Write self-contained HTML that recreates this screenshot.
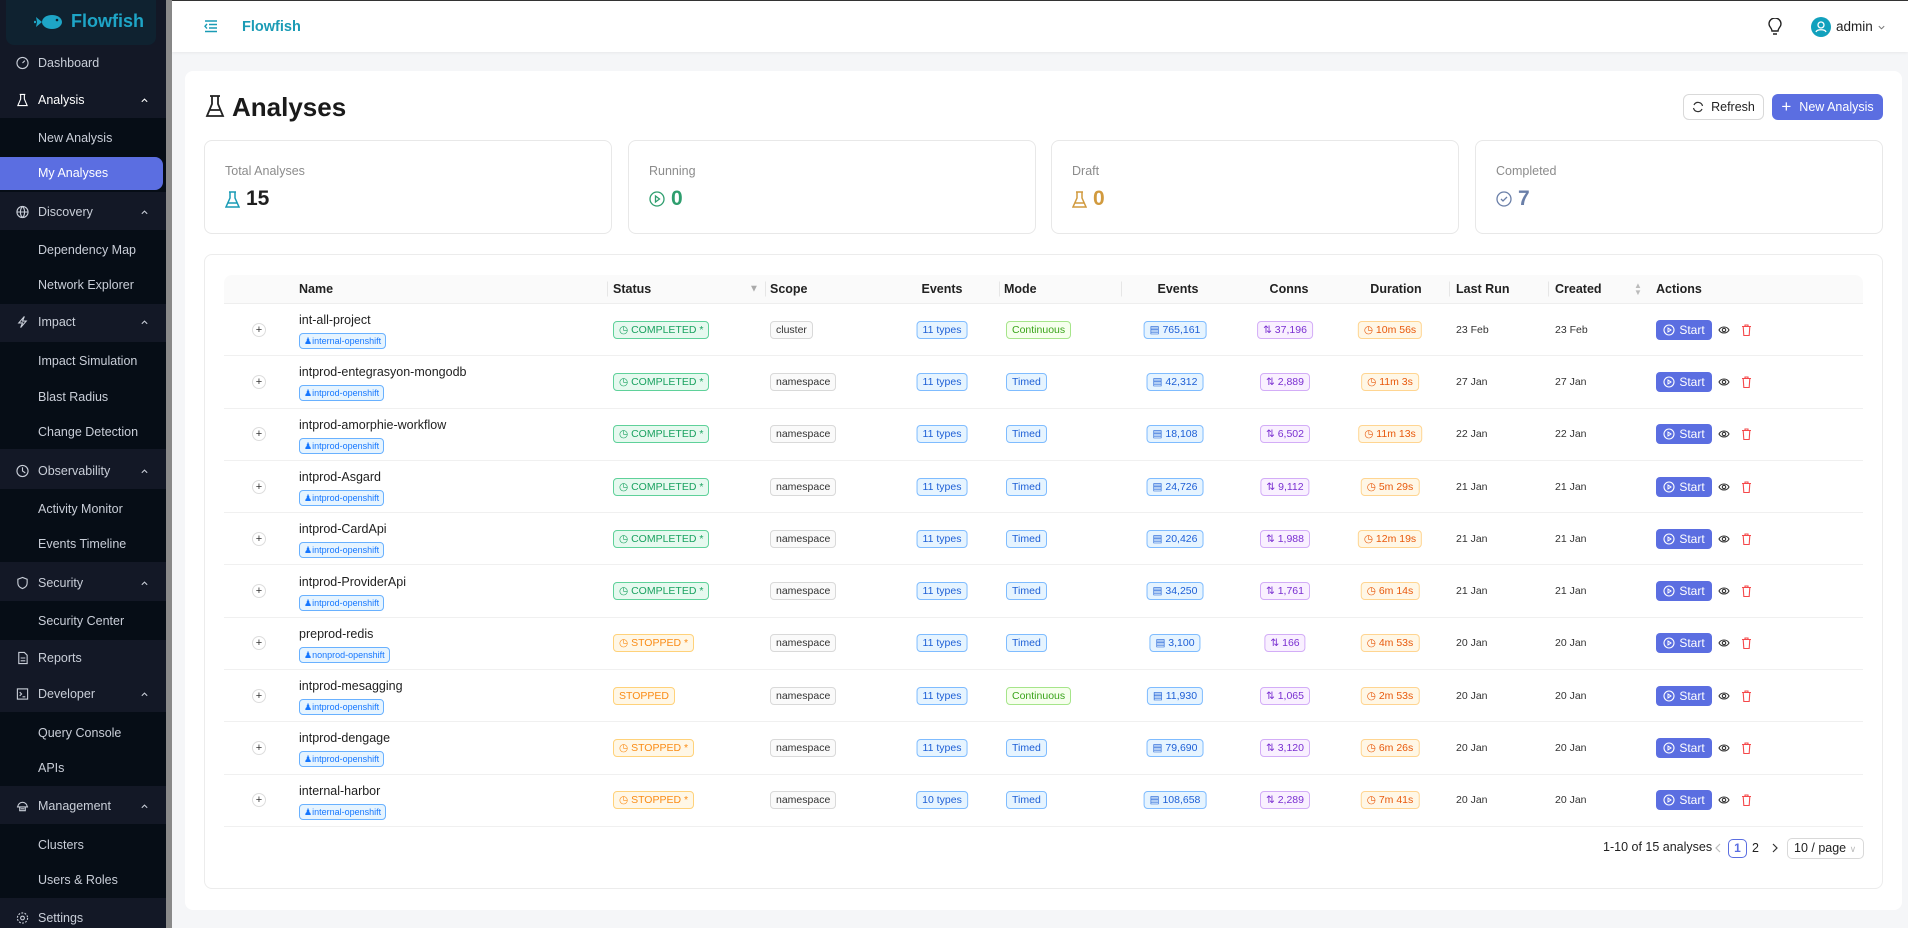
<!DOCTYPE html>
<html><head><meta charset="utf-8">
<style>
*{box-sizing:border-box;margin:0;padding:0}
body{width:1908px;height:928px;overflow:hidden;background:#f5f6f8;font-family:"Liberation Sans",sans-serif;position:relative;color:#1f1f1f}
.sb{position:absolute;left:0;top:0;width:166px;height:928px;background:#131826}
.scroll{position:absolute;left:166px;top:0;width:6px;height:928px;background:#8a8a8a}
.logo{position:absolute;left:6px;top:0;width:150px;height:45px;background:#0f2230;border-radius:0 0 8px 8px}
.logo span{position:absolute;left:65px;top:11px;color:#1ea5c6;font-weight:bold;font-size:18px}
.sub{position:absolute;left:0;width:166px;background:#060d16}
.it{position:absolute;left:38px;font-size:12.5px;color:#c9ced8;transform:translateY(-50%)}
.ic{position:absolute;left:16px;transform:translateY(-50%);width:13px;height:13px}
.chev{position:absolute;left:140px;transform:translateY(-50%);width:9px;height:9px}
.hl{position:absolute;left:0;top:157px;width:163px;height:33px;background:#5b6ee1;border-radius:0 8px 8px 0}
.hdr{position:absolute;left:172px;top:0;width:1736px;height:52px;background:#fff;border-top:1px solid #333;box-shadow:0 1px 3px rgba(0,0,0,.06)}
.main{position:absolute;left:185px;top:71px;width:1717px;height:839px;background:#fff;border-radius:8px}
.card{position:absolute;top:140px;width:408px;height:94px;background:#fff;border:1px solid #e8e8e8;border-radius:8px}
.card .l{position:absolute;left:20px;top:23px;font-size:12.5px;color:#8c8c8c}
.card .v{position:absolute;left:20px;top:46px;font-size:21px;font-weight:bold;display:flex;align-items:center;gap:6px}
.tbl{position:absolute;left:204px;top:254px;width:1679px;height:635px;border:1px solid #ececec;border-radius:8px;background:#fff}
.th{position:absolute;left:224px;top:275px;width:1639px;height:29px;background:#fafafa;border-bottom:1px solid #eee;border-radius:8px 8px 0 0}
.th div{position:absolute;top:50%;transform:translateY(-50%);font-size:12.5px;font-weight:bold;color:#222}
.th .c{transform:translate(-50%,-50%)}
.th .dv{width:1px;height:15px;background:#e6e6e6}
.row{position:absolute;left:224px;width:1639px;height:52.3px;border-bottom:1px solid #f0f0f0}
.row>*{position:absolute;top:50%;transform:translateY(-50%)}
.row>.c{transform:translate(-50%,-50%)}
.pl{left:28px;width:14px;height:14px;border:1px solid #ddd;border-radius:50%;font-size:11px;line-height:12px;text-align:center;color:#333}
.nm{left:75px;top:16px !important;font-size:12.5px;color:#1f1f1f}
.tag{left:75px;top:37px !important;font-size:9px;color:#1677ff;background:#e6f4ff;border:1px solid #69b1ff;border-radius:4px;padding:1px 4px;height:16px;line-height:13px}
.b{font-size:10.5px;border:1px solid;border-radius:4px;padding:0 5px;height:18px;line-height:16px;white-space:nowrap}
.ok{left:389px;color:#1aa260;background:#e6f9ef;border-color:#5fd19a}
.st{left:389px;color:#fa8c16;background:#fff7e6;border-color:#ffd27a}
.sc{left:546px;color:#333;background:#fafafa;border-color:#d9d9d9}
.ty{left:718px;color:#1d5fd6;background:#e6f4ff;border-color:#7fbcff}
.mt{left:782px;color:#1d5fd6;background:#e6f4ff;border-color:#7fbcff}
.mc{left:782px;color:#3aa41a;background:#f6ffed;border-color:#a6e58a}
.ev{left:951px;color:#1d5fd6;background:#e6f4ff;border-color:#7fbcff}
.cn{left:1061px;color:#7a2fd1;background:#f9f0ff;border-color:#d3adf7}
.du{left:1166px;color:#e8590c;background:#fff7e6;border-color:#ffd591}
.d1{left:1232px;font-size:10.5px;color:#333}
.d2{left:1331px;font-size:10.5px;color:#333}
.sbtn{left:1432px;background:#5b6ee1;color:#fff;font-size:12px;height:20px;width:56px;border-radius:4px;display:flex;align-items:center;justify-content:center;gap:4px}
.eye{left:1494px;width:12px;height:12px}
.tr{left:1517px;width:11px;height:13px}
</style></head><body>

<div class="sb"></div><div class="scroll"></div>
<div class="logo">
<svg style="position:absolute;left:28px;top:12px" width="32" height="20" viewBox="0 0 32 20"><ellipse cx="18" cy="10" rx="10" ry="7" fill="#1ea5c6"/><path d="M8 10 L2 5 L3 10 L2 15Z" fill="#1ea5c6"/><circle cx="23" cy="8" r="1.3" fill="#0f2230"/><circle cx="1" cy="10" r="1.2" fill="#1ea5c6"/></svg>
<span>Flowfish</span></div>

<div class="sub" style="top:118px;height:74px"></div>
<div class="sub" style="top:230px;height:74px"></div>
<div class="sub" style="top:342px;height:107px"></div>
<div class="sub" style="top:489px;height:73px"></div>
<div class="sub" style="top:601px;height:39px"></div>
<div class="sub" style="top:712px;height:74px"></div>
<div class="sub" style="top:824px;height:74px"></div>
<div class="hl"></div>

<svg class="ic" style="top:63px" viewBox="0 0 14 14" fill="none" stroke="#c9ced8" stroke-width="1.2"><circle cx="7" cy="7" r="6"/><path d="M7 7 L9.5 4.5"/></svg>
<div class="it" style="top:63px">Dashboard</div>
<svg class="ic" style="top:100px" viewBox="0 0 14 14" fill="none" stroke="#fff" stroke-width="1.2"><path d="M4 1h6M5 1v5L2 13h10L9 6V1"/></svg>
<div class="it" style="top:100px;color:#fff">Analysis</div>
<div class="it" style="top:137.5px">New Analysis</div>
<div class="it" style="top:173px;color:#fff">My Analyses</div>
<svg class="ic" style="top:212px" viewBox="0 0 14 14" fill="none" stroke="#c9ced8" stroke-width="1.2"><circle cx="7" cy="7" r="6"/><path d="M1 7h12M7 1c-3 3-3 9 0 12M7 1c3 3 3 9 0 12"/></svg>
<div class="it" style="top:212px">Discovery</div>
<div class="it" style="top:249.5px">Dependency Map</div>
<div class="it" style="top:285px">Network Explorer</div>
<svg class="ic" style="top:322px" viewBox="0 0 14 14" fill="none" stroke="#c9ced8" stroke-width="1.2"><path d="M9 1L3 8h4l-2 5 6-7H7z"/></svg>
<div class="it" style="top:322px">Impact</div>
<div class="it" style="top:361px">Impact Simulation</div>
<div class="it" style="top:397px">Blast Radius</div>
<div class="it" style="top:432px">Change Detection</div>
<svg class="ic" style="top:471px" viewBox="0 0 14 14" fill="none" stroke="#c9ced8" stroke-width="1.2"><circle cx="7" cy="7" r="6"/><path d="M7 3v4l3 2"/></svg>
<div class="it" style="top:471px">Observability</div>
<div class="it" style="top:508.6px">Activity Monitor</div>
<div class="it" style="top:544px">Events Timeline</div>
<svg class="ic" style="top:583px" viewBox="0 0 14 14" fill="none" stroke="#c9ced8" stroke-width="1.2"><path d="M7 1l5 2v4c0 3-2 5-5 6-3-1-5-3-5-6V3z"/></svg>
<div class="it" style="top:583px">Security</div>
<div class="it" style="top:620.6px">Security Center</div>
<svg class="ic" style="top:658px" viewBox="0 0 14 14" fill="none" stroke="#c9ced8" stroke-width="1.2"><path d="M3 1h6l3 3v9H3zM5 7h5M5 10h5"/></svg>
<div class="it" style="top:658px">Reports</div>
<svg class="ic" style="top:693.6px" viewBox="0 0 14 14" fill="none" stroke="#c9ced8" stroke-width="1.2"><rect x="1.5" y="1.5" width="11" height="11"/><path d="M4 5l2 2-2 2M7 10h3"/></svg>
<div class="it" style="top:693.6px">Developer</div>
<div class="it" style="top:732.5px">Query Console</div>
<div class="it" style="top:768px">APIs</div>
<svg class="ic" style="top:805.5px" viewBox="0 0 14 14" fill="none" stroke="#c9ced8" stroke-width="1.2"><path d="M2 8a5 5 0 0110 0M1 8h12M4 8v4h6V8M5 10h4"/></svg>
<div class="it" style="top:805.5px">Management</div>
<div class="it" style="top:844.5px">Clusters</div>
<div class="it" style="top:879.7px">Users &amp; Roles</div>
<svg class="ic" style="top:917.5px" viewBox="0 0 14 14" fill="none" stroke="#c9ced8" stroke-width="1.2"><circle cx="7" cy="7" r="2"/><circle cx="7" cy="7" r="5.5" stroke-dasharray="2 1.5"/></svg>
<div class="it" style="top:917.5px">Settings</div>
<svg class="chev" style="top:100px" viewBox="0 0 10 10" fill="none" stroke="#fff" stroke-width="1.2"><path d="M2 7l3-3 3 3"/></svg>
<svg class="chev" style="top:212px" viewBox="0 0 10 10" fill="none" stroke="#c9ced8" stroke-width="1.2"><path d="M2 7l3-3 3 3"/></svg>
<svg class="chev" style="top:322px" viewBox="0 0 10 10" fill="none" stroke="#c9ced8" stroke-width="1.2"><path d="M2 7l3-3 3 3"/></svg>
<svg class="chev" style="top:471px" viewBox="0 0 10 10" fill="none" stroke="#c9ced8" stroke-width="1.2"><path d="M2 7l3-3 3 3"/></svg>
<svg class="chev" style="top:583px" viewBox="0 0 10 10" fill="none" stroke="#c9ced8" stroke-width="1.2"><path d="M2 7l3-3 3 3"/></svg>
<svg class="chev" style="top:693.6px" viewBox="0 0 10 10" fill="none" stroke="#c9ced8" stroke-width="1.2"><path d="M2 7l3-3 3 3"/></svg>
<svg class="chev" style="top:805.5px" viewBox="0 0 10 10" fill="none" stroke="#c9ced8" stroke-width="1.2"><path d="M2 7l3-3 3 3"/></svg>

<div class="hdr">
<svg style="position:absolute;left:32px;top:19px" width="14" height="13" viewBox="0 0 14 13" fill="none" stroke="#1a9bb5" stroke-width="1.4"><path d="M1 1h12M5 4.5h8M5 8h8M1 11.5h12M3 4l-2 2.3 2 2.3"/></svg>
<div style="position:absolute;left:70px;top:18px;font-size:14.5px;font-weight:bold;color:#1a9bb5">Flowfish</div>
<svg style="position:absolute;left:1596px;top:17px" width="14" height="18" viewBox="0 0 14 18" fill="none" stroke="#222" stroke-width="1.4"><path d="M4 13c0-3-3-4-3-7a6 6 0 0112 0c0 3-3 4-3 7zM5 16h4"/></svg>
<div style="position:absolute;left:1639px;top:16px;width:20px;height:20px;border-radius:50%;background:#12a1bd"><svg width="20" height="20" viewBox="0 0 20 20" fill="none" stroke="#fff" stroke-width="1.3"><circle cx="10" cy="8" r="3"/><path d="M5 15c1-3 9-3 10 0"/></svg></div>
<div style="position:absolute;left:1664px;top:18px;font-size:13.5px;color:#222">admin</div>
<svg style="position:absolute;left:1705px;top:22px" width="9" height="9" viewBox="0 0 10 10" fill="none" stroke="#777" stroke-width="1.1"><path d="M2 3.5l3 3 3-3"/></svg>
</div>

<div class="main"></div>
<svg style="position:absolute;left:205px;top:94px" width="20" height="24" viewBox="0 0 20 24" fill="none" stroke="#222" stroke-width="1.8"><path d="M5 2h10M7 2v8L2 22h16L13 10V2M5 16h10"/></svg>
<div style="position:absolute;left:232px;top:92px;font-size:26px;font-weight:bold;color:#1a1a1a">Analyses</div>
<div style="position:absolute;left:1683px;top:94px;width:81px;height:26px;border:1px solid #d9d9d9;border-radius:6px;background:#fff;font-size:12.5px;display:flex;align-items:center;justify-content:center;gap:7px;color:#222"><svg width="12" height="12" viewBox="0 0 12 12" fill="none" stroke="#333" stroke-width="1.2"><path d="M10.5 5A4.5 4.5 0 002 4M1.5 7A4.5 4.5 0 0010 8"/></svg>Refresh</div>
<div style="position:absolute;left:1772px;top:94px;width:111px;height:26px;border-radius:6px;background:#5b6ee1;font-size:12.5px;display:flex;align-items:center;justify-content:center;gap:8px;color:#fff"><span style="font-size:17px;line-height:10px">+</span>New Analysis</div>

<div class="card" style="left:204px"><div class="l">Total Analyses</div><div class="v"><svg width="15" height="17" viewBox="0 0 15 17" fill="none" stroke="#1a9bb5" stroke-width="1.5"><path d="M4 1h7M5 1v6L1 16h13L10 7V1M3 12h9"/></svg><span style="color:#1f1f1f">15</span></div></div>
<div class="card" style="left:628px"><div class="l">Running</div><div class="v"><svg width="16" height="16" viewBox="0 0 16 16" fill="none" stroke="#2e9e6e" stroke-width="1.3"><circle cx="8" cy="8" r="7"/><path d="M6.5 5v6l4-3z"/></svg><span style="color:#2e9e6e">0</span></div></div>
<div class="card" style="left:1051px"><div class="l">Draft</div><div class="v"><svg width="15" height="17" viewBox="0 0 15 17" fill="none" stroke="#d19a3e" stroke-width="1.5"><path d="M4 1h7M5 1v6L1 16h13L10 7V1M3 12h9"/></svg><span style="color:#d19a3e">0</span></div></div>
<div class="card" style="left:1475px"><div class="l">Completed</div><div class="v"><svg width="16" height="16" viewBox="0 0 16 16" fill="none" stroke="#6a7fa8" stroke-width="1.3"><circle cx="8" cy="8" r="7"/><path d="M5 8l2 2 4-4"/></svg><span style="color:#6a7fa8">7</span></div></div>

<div class="tbl"></div>
<div class="th">
<div style="left:75px">Name</div>
<div class="dv" style="left:383px"></div>
<div style="left:389px">Status</div>
<div style="left:525px;color:#aaa;font-size:10px">&#9660;</div>
<div class="dv" style="left:541px"></div>
<div style="left:546px">Scope</div>
<div class="c" style="left:718px">Events</div>
<div class="dv" style="left:775px"></div>
<div style="left:780px">Mode</div>
<div class="dv" style="left:897px"></div>
<div class="c" style="left:954px">Events</div>
<div class="c" style="left:1065px">Conns</div>
<div class="c" style="left:1172px">Duration</div>
<div class="dv" style="left:1225px"></div>
<div style="left:1232px">Last Run</div>
<div class="dv" style="left:1324px"></div>
<div style="left:1331px">Created</div>
<div style="left:1410px;color:#bbb;font-size:8px;line-height:7px">&#9650;<br>&#9660;</div>
<div style="left:1432px">Actions</div>
</div>

<svg width="0" height="0" style="position:absolute">
<defs>
<symbol id="eye" viewBox="0 0 12 12"><path d="M1 6c2-4 8-4 10 0-2 4-8 4-10 0z" fill="none" stroke="#333" stroke-width="1.1"/><circle cx="6" cy="6" r="1.7" fill="none" stroke="#333" stroke-width="1.1"/></symbol>
<symbol id="tr" viewBox="0 0 11 13"><path d="M1 3h9M4 3V1.5h3V3M2.2 3l.6 9h5.4l.6-9" fill="none" stroke="#f5484a" stroke-width="1.1"/></symbol>
<symbol id="pl" viewBox="0 0 12 12"><circle cx="6" cy="6" r="5" fill="none" stroke="#fff" stroke-width="1.1"/><path d="M5 4v4l3-2z" fill="none" stroke="#fff" stroke-width="1"/></symbol>
</defs></svg>

<div class="row" style="top:304px"><div class="pl">+</div><div class="nm">int-all-project</div><div class="tag">&#9823;internal-openshift</div><div class="b ok">&#9719; COMPLETED *</div><div class="b sc">cluster</div><div class="b ty c">11 types</div><div class="b mc">Continuous</div><div class="b ev c">&#9636; 765,161</div><div class="b cn c">&#8645; 37,196</div><div class="b du c">&#9719; 10m 56s</div><div class="d1">23 Feb</div><div class="d2">23 Feb</div><div class="sbtn"><svg width="12" height="12"><use href="#pl"/></svg>Start</div><svg class="eye"><use href="#eye"/></svg><svg class="tr"><use href="#tr"/></svg></div>
<div class="row" style="top:356.3px"><div class="pl">+</div><div class="nm">intprod-entegrasyon-mongodb</div><div class="tag">&#9823;intprod-openshift</div><div class="b ok">&#9719; COMPLETED *</div><div class="b sc">namespace</div><div class="b ty c">11 types</div><div class="b mt">Timed</div><div class="b ev c">&#9636; 42,312</div><div class="b cn c">&#8645; 2,889</div><div class="b du c">&#9719; 11m 3s</div><div class="d1">27 Jan</div><div class="d2">27 Jan</div><div class="sbtn"><svg width="12" height="12"><use href="#pl"/></svg>Start</div><svg class="eye"><use href="#eye"/></svg><svg class="tr"><use href="#tr"/></svg></div>
<div class="row" style="top:408.6px"><div class="pl">+</div><div class="nm">intprod-amorphie-workflow</div><div class="tag">&#9823;intprod-openshift</div><div class="b ok">&#9719; COMPLETED *</div><div class="b sc">namespace</div><div class="b ty c">11 types</div><div class="b mt">Timed</div><div class="b ev c">&#9636; 18,108</div><div class="b cn c">&#8645; 6,502</div><div class="b du c">&#9719; 11m 13s</div><div class="d1">22 Jan</div><div class="d2">22 Jan</div><div class="sbtn"><svg width="12" height="12"><use href="#pl"/></svg>Start</div><svg class="eye"><use href="#eye"/></svg><svg class="tr"><use href="#tr"/></svg></div>
<div class="row" style="top:460.9px"><div class="pl">+</div><div class="nm">intprod-Asgard</div><div class="tag">&#9823;intprod-openshift</div><div class="b ok">&#9719; COMPLETED *</div><div class="b sc">namespace</div><div class="b ty c">11 types</div><div class="b mt">Timed</div><div class="b ev c">&#9636; 24,726</div><div class="b cn c">&#8645; 9,112</div><div class="b du c">&#9719; 5m 29s</div><div class="d1">21 Jan</div><div class="d2">21 Jan</div><div class="sbtn"><svg width="12" height="12"><use href="#pl"/></svg>Start</div><svg class="eye"><use href="#eye"/></svg><svg class="tr"><use href="#tr"/></svg></div>
<div class="row" style="top:513.2px"><div class="pl">+</div><div class="nm">intprod-CardApi</div><div class="tag">&#9823;intprod-openshift</div><div class="b ok">&#9719; COMPLETED *</div><div class="b sc">namespace</div><div class="b ty c">11 types</div><div class="b mt">Timed</div><div class="b ev c">&#9636; 20,426</div><div class="b cn c">&#8645; 1,988</div><div class="b du c">&#9719; 12m 19s</div><div class="d1">21 Jan</div><div class="d2">21 Jan</div><div class="sbtn"><svg width="12" height="12"><use href="#pl"/></svg>Start</div><svg class="eye"><use href="#eye"/></svg><svg class="tr"><use href="#tr"/></svg></div>
<div class="row" style="top:565.5px"><div class="pl">+</div><div class="nm">intprod-ProviderApi</div><div class="tag">&#9823;intprod-openshift</div><div class="b ok">&#9719; COMPLETED *</div><div class="b sc">namespace</div><div class="b ty c">11 types</div><div class="b mt">Timed</div><div class="b ev c">&#9636; 34,250</div><div class="b cn c">&#8645; 1,761</div><div class="b du c">&#9719; 6m 14s</div><div class="d1">21 Jan</div><div class="d2">21 Jan</div><div class="sbtn"><svg width="12" height="12"><use href="#pl"/></svg>Start</div><svg class="eye"><use href="#eye"/></svg><svg class="tr"><use href="#tr"/></svg></div>
<div class="row" style="top:617.8px"><div class="pl">+</div><div class="nm">preprod-redis</div><div class="tag">&#9823;nonprod-openshift</div><div class="b st">&#9719; STOPPED *</div><div class="b sc">namespace</div><div class="b ty c">11 types</div><div class="b mt">Timed</div><div class="b ev c">&#9636; 3,100</div><div class="b cn c">&#8645; 166</div><div class="b du c">&#9719; 4m 53s</div><div class="d1">20 Jan</div><div class="d2">20 Jan</div><div class="sbtn"><svg width="12" height="12"><use href="#pl"/></svg>Start</div><svg class="eye"><use href="#eye"/></svg><svg class="tr"><use href="#tr"/></svg></div>
<div class="row" style="top:670.1px"><div class="pl">+</div><div class="nm">intprod-mesagging</div><div class="tag">&#9823;intprod-openshift</div><div class="b st">STOPPED</div><div class="b sc">namespace</div><div class="b ty c">11 types</div><div class="b mc">Continuous</div><div class="b ev c">&#9636; 11,930</div><div class="b cn c">&#8645; 1,065</div><div class="b du c">&#9719; 2m 53s</div><div class="d1">20 Jan</div><div class="d2">20 Jan</div><div class="sbtn"><svg width="12" height="12"><use href="#pl"/></svg>Start</div><svg class="eye"><use href="#eye"/></svg><svg class="tr"><use href="#tr"/></svg></div>
<div class="row" style="top:722.4px"><div class="pl">+</div><div class="nm">intprod-dengage</div><div class="tag">&#9823;intprod-openshift</div><div class="b st">&#9719; STOPPED *</div><div class="b sc">namespace</div><div class="b ty c">11 types</div><div class="b mt">Timed</div><div class="b ev c">&#9636; 79,690</div><div class="b cn c">&#8645; 3,120</div><div class="b du c">&#9719; 6m 26s</div><div class="d1">20 Jan</div><div class="d2">20 Jan</div><div class="sbtn"><svg width="12" height="12"><use href="#pl"/></svg>Start</div><svg class="eye"><use href="#eye"/></svg><svg class="tr"><use href="#tr"/></svg></div>
<div class="row" style="top:774.7px"><div class="pl">+</div><div class="nm">internal-harbor</div><div class="tag">&#9823;internal-openshift</div><div class="b st">&#9719; STOPPED *</div><div class="b sc">namespace</div><div class="b ty c">10 types</div><div class="b mt">Timed</div><div class="b ev c">&#9636; 108,658</div><div class="b cn c">&#8645; 2,289</div><div class="b du c">&#9719; 7m 41s</div><div class="d1">20 Jan</div><div class="d2">20 Jan</div><div class="sbtn"><svg width="12" height="12"><use href="#pl"/></svg>Start</div><svg class="eye"><use href="#eye"/></svg><svg class="tr"><use href="#tr"/></svg></div>

<div style="position:absolute;left:1603px;top:840px;font-size:12.5px;color:#222">1-10 of 15 analyses</div>
<svg style="position:absolute;left:1714px;top:843px" width="8" height="10" viewBox="0 0 8 10" fill="none" stroke="#bbb" stroke-width="1.2"><path d="M6 1L2 5l4 4"/></svg>
<div style="position:absolute;left:1728px;top:839px;width:19px;height:19px;border:1px solid #5b6ee1;border-radius:5px;font-size:12px;color:#5b6ee1;text-align:center;line-height:17px;font-weight:bold">1</div>
<div style="position:absolute;left:1752px;top:841px;font-size:12.5px;color:#222">2</div>
<svg style="position:absolute;left:1771px;top:843px" width="8" height="10" viewBox="0 0 8 10" fill="none" stroke="#333" stroke-width="1.2"><path d="M2 1l4 4-4 4"/></svg>
<div style="position:absolute;left:1787px;top:838px;width:77px;height:21px;border:1px solid #d9d9d9;border-radius:5px;font-size:12.5px;color:#222;padding-left:6px;line-height:19px">10 / page <span style="color:#bbb;font-size:9px">&#8744;</span></div>
</body></html>
